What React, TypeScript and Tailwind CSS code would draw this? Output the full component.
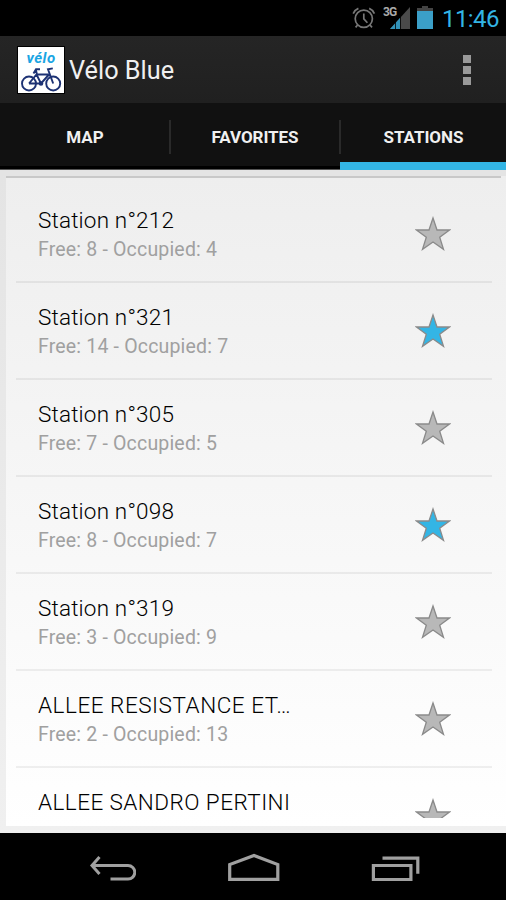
import React from 'react';
import clsx from 'clsx';

interface Station {
  name: string;
  nameClass: string;
  info?: string;
  favorite?: boolean;
}

const stations: Station[] = [
  { name: 'Station n°212', nameClass: 'tracking-[0.18px]', info: 'Free: 8 - Occupied: 4' },
  { name: 'Station n°321', nameClass: 'tracking-[0.18px]', info: 'Free: 14 - Occupied: 7', favorite: true },
  { name: 'Station n°305', nameClass: 'tracking-[0.18px]', info: 'Free: 7 - Occupied: 5' },
  { name: 'Station n°098', nameClass: 'tracking-[0.18px]', info: 'Free: 8 - Occupied: 7', favorite: true },
  { name: 'Station n°319', nameClass: 'tracking-[0.18px]', info: 'Free: 3 - Occupied: 9' },
  { name: 'ALLEE RESISTANCE ET…', nameClass: 'tracking-[0.53px]', info: 'Free: 2 - Occupied: 13' },
  { name: 'ALLEE SANDRO PERTINI', nameClass: 'tracking-[0.45px]' },
];

const tabs = ['MAP', 'FAVORITES', 'STATIONS'];

const StatusBar: React.FC = () => (
  <div className="flex h-9 shrink-0 items-start bg-black pl-[352px]">
    {/* Alarm */}
    <svg className="mt-1.5 h-6 w-6 shrink-0" viewBox="0 0 24 24" fill="none" stroke="#777" strokeWidth="1.7">
      <circle cx="11.8" cy="12.8" r="8.6" />
      <path d="M11.8 7.5v5.3l3.6 4M1.2 7.6C2.2 5.4 4 3.4 6.4 2.4M22.4 7.6c-1-2.2-2.8-4.2-5.2-5.2M5.6 19l-2 2.4M18 19l2 2.4" />
    </svg>
    {/* Signal */}
    <div className="ml-[7px] flex h-9 w-7 shrink-0">
      <span className="mt-[6px] w-[14px] shrink-0 text-[12px] leading-[13px] font-bold tracking-[-0.8px] text-[#aaa]">3G</span>
      <svg className="mt-[7px] -ml-[7px] h-[22px] w-[21px] shrink-0" viewBox="0 0 21 22">
        <path d="M20 0v22H0z" fill="#4a4a4a" />
        <path d="M10 11v11H0z" fill="#3193ba" />
        <path d="M5.5 15v7M10.5 9v13" stroke="#000" strokeWidth="0.8" />
      </svg>
    </div>
    {/* Battery */}
    <svg className="mt-1.5 ml-[6px] h-[23px] w-4 shrink-0" viewBox="0 0 16 23">
      <path d="M5 0h6v2h5v3H0V2h5z" fill="#444" />
      <path d="M0 5h16v18H0z" fill="#3b9fc8" />
    </svg>
    <span className="mt-[4px] ml-[9px] text-[24px] leading-[30px] tracking-[-0.6px] text-[#33b5e5]">11:46</span>
  </div>
);

const Logo: React.FC = () => (
  <div className="flex h-[46px] w-[46px] flex-col items-center overflow-hidden bg-white outline-1 outline-black">
    <span className="mt-[3px] h-[15px] text-[15px] leading-[16px] font-bold tracking-[0.5px] text-[#1ba5e3] italic">vélo</span>
    <svg className="h-[28px] w-[46px]" viewBox="0 0 46 28" fill="none" stroke="#1d3274" strokeWidth="1.9">
      <circle cx="11" cy="18.5" r="7" />
      <circle cx="35.2" cy="18.5" r="7" />
      <path d="M11 18.5 18.5 9.5h12M18.5 9.5l4.5 9L31 9.5M11 18.5H23M35.2 18.5 30 4.2l4.8-.8M15.5 8.5 18 4.2h4M18 5.5l1 4" />
      <circle cx="23" cy="18.5" r="1.4" fill="#1d3274" />
    </svg>
  </div>
);

const ActionBar: React.FC = () => (
  <div className="flex h-[67px] shrink-0 items-center bg-linear-to-b from-[#252525] to-[#202020] pl-[18px]">
    <Logo />
    <span className="mt-[2px] ml-[5px] text-[25.3px] leading-[30px] text-[#f0f0f0]">Vélo Blue</span>
    <div className="mr-[35px] ml-auto flex flex-col gap-[3px]">
      <i className="h-2 w-2 bg-[#999]" />
      <i className="h-2 w-2 bg-[#999]" />
      <i className="h-2 w-2 bg-[#999]" />
    </div>
  </div>
);

const TabBar: React.FC = () => (
  <div className="grid h-[67px] shrink-0 grid-cols-[170px_170px_166px] bg-[#111]">
    {tabs.map((tab, i) => (
      <div
        key={tab}
        className={clsx(
          'flex flex-col border-b',
          i === 2 ? 'border-[#33b5e5]' : 'border-[#555]'
        )}
      >
        <div className="mt-[17px] flex h-[34px] items-center">
          <span className="flex-1 pt-[2px] pl-px text-center text-[17px] font-bold tracking-[-0.05px] text-[#f0f0f0]">{tab}</span>
          {i < 2 && <i className="-mr-px h-full w-[2px] bg-[#2a2a2a]" />}
        </div>
        <div className={clsx('mt-auto', i === 2 ? 'h-[7px] bg-[#33b5e5]' : 'h-[3px] bg-black')} />
      </div>
    ))}
  </div>
);

const Star: React.FC<{ active?: boolean }> = ({ active }) => (
  <svg className="h-9 w-9" viewBox="0 0 36 36">
    <path
      d="M18 2l4 12h12.5L24.7 21.3l3.8 12L18 26 7.5 33.3l3.8-12L1.5 14H14z"
      fill={active ? '#33b5e5' : '#b8b8b8'}
      stroke="#8a8a8a"
      strokeWidth="1.3"
    />
  </svg>
);

const StationRow: React.FC<{ station: Station }> = ({ station }) => (
  <div className="flex h-[97px] shrink-0 items-start border-b-2 border-black/6 pl-[22px]">
    <div className="mt-[19px]">
      <div className={clsx('text-[22.5px] leading-[30px] font-light whitespace-nowrap text-black', station.nameClass)}>
        {station.name}
      </div>
      {station.info && (
        <div className="mt-px text-[19.5px] leading-[28px] tracking-[0.18px] whitespace-nowrap text-[#a0a0a0]">
          {station.info}
        </div>
      )}
    </div>
    <div className="mt-[30px] mr-[41px] ml-auto">
      <Star active={station.favorite} />
    </div>
  </div>
);

const NavBar: React.FC = () => (
  <div className="flex h-[67px] shrink-0 items-start bg-black pt-5 pl-[88px]">
    <svg className="h-8 w-12" viewBox="0 0 48 32" fill="none" stroke="#a0a0a0" strokeWidth="3">
      <path d="M11.5 4 4 12.5l7.5 8.5M4 12.5h36a6.8 6.8 0 0 1 0 13.6H22.5" />
    </svg>
    <svg className="ml-[91px] h-8 w-[54px]" viewBox="0 0 54 32" fill="none" stroke="#a0a0a0" strokeWidth="3.2">
      <path d="M2.7 26.4V11.5L27 2.5l23.8 9v14.9z" />
    </svg>
    <svg className="ml-[90px] h-8 w-[50px]" viewBox="0 0 50 32" fill="none" stroke="#a0a0a0" strokeWidth="3.2">
      <path d="M2.4 12.5h37.5v14H2.4zM11.5 5.2h35.3v15.5" />
    </svg>
  </div>
);

const App: React.FC = () => {
  return (
    <div className="flex h-[900px] w-[506px] flex-col overflow-hidden bg-black font-[Roboto,sans-serif]">
      <StatusBar />
      <ActionBar />
      <TabBar />
      {/* Station list */}
      <div className="h-[663px] shrink-0 bg-linear-to-b from-[#e4e4e4] to-[#f0f0f0] pt-[6px] pb-[7px] pl-[6px]">
        <div className="flex h-full bg-linear-to-b from-[#eeeeee] to-white">
          <div className="h-full flex-1 border-t-2 border-[#c8c8c8] pt-[8px] pr-[9px] pb-[8px] pl-[10px]">
            <div className="flex h-full flex-col overflow-hidden">
              {stations.map((station) => (
                <StationRow key={station.name} station={station} />
              ))}
            </div>
          </div>
          <div className="w-[5px]" />
        </div>
      </div>
      <NavBar />
    </div>
  );
};

export default App;
